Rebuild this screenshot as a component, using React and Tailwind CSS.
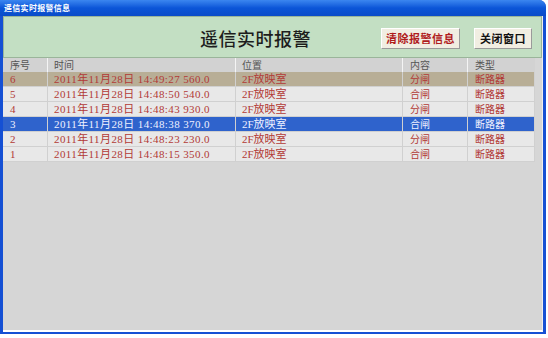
import React from "react";

const rows = [
  { id: "6", time: "2011年11月28日 14:49:27 560.0", loc: "2F放映室", act: "分闸", type: "断路器", sel: "tan" },
  { id: "5", time: "2011年11月28日 14:48:50 540.0", loc: "2F放映室", act: "合闸", type: "断路器" },
  { id: "4", time: "2011年11月28日 14:48:43 930.0", loc: "2F放映室", act: "分闸", type: "断路器" },
  { id: "3", time: "2011年11月28日 14:48:38 370.0", loc: "2F放映室", act: "合闸", type: "断路器", sel: "blue" },
  { id: "2", time: "2011年11月28日 14:48:23 230.0", loc: "2F放映室", act: "分闸", type: "断路器" },
  { id: "1", time: "2011年11月28日 14:48:15 350.0", loc: "2F放映室", act: "合闸", type: "断路器" },
];

const cjk = { fontFamily: '"Noto Sans CJK SC", sans-serif' };
const serif = { fontFamily: '"Liberation Serif", "Noto Sans CJK SC", serif' };

export default function App() {
  return (
    <div className="w-[548px] h-[338px] bg-white overflow-hidden">
      <div className="w-[546px] h-[334px] bg-[#1550d4] flex flex-col rounded-tr-[7px] px-[3px] pb-[2px]">
        {/* title bar */}
        <div className="h-[16px] shrink-0 -mx-[3px] px-[4px] flex items-center rounded-tr-[7px] bg-gradient-to-b from-[#3b86f0] via-[#0b55d8] to-[#0a4cc8]">
          <span className="text-[8px] font-bold text-white leading-none tracking-[0.3px]" style={cjk}>遥信实时报警信息</span>
        </div>
        {/* client */}
        <div className="flex-1 flex flex-col bg-[#d6d6d6] border-b-[2px] border-b-white border-r border-r-[#eeeeee]">
          {/* green panel */}
          <div className="h-[42px] shrink-0 bg-[#c3dfc3] border border-[#9ab59a] flex items-center">
            <div className="w-[196px]" />
            <div className="text-[18px] font-medium text-[#1d1d1d] tracking-[0.5px] leading-none pt-[2px]" style={cjk}>遥信实时报警</div>
            <div className="flex-1" />
            <button className="w-[79px] h-[21px] bg-[#f1eee2] border border-t-white border-l-white border-r-[#9a9a9a] border-b-[#9a9a9a] text-[11px] font-bold text-[#b01c1c] leading-none mt-[2px] tracking-[0.5px]" style={cjk}>清除报警信息</button>
            <div className="w-[14px]" />
            <button className="w-[58px] h-[21px] bg-[#f1eee2] border border-t-white border-l-white border-r-[#9a9a9a] border-b-[#9a9a9a] text-[11px] font-bold text-[#111] leading-none mt-[2px] tracking-[0.5px]" style={cjk}>关闭窗口</button>
            <div className="w-[9px]" />
          </div>
          {/* header */}
          <div className="h-[14px] shrink-0 flex text-[10px] text-[#555]" style={cjk}>
            <div className="w-[45px] pl-[7px] bg-[#d2d2d2] border-r border-[#f4f4f4] flex items-center leading-none">序号</div>
            <div className="w-[188px] pl-[6px] bg-[#d2d2d2] border-r border-[#f4f4f4] flex items-center leading-none">时间</div>
            <div className="w-[167px] pl-[6px] bg-[#d2d2d2] border-r border-[#f4f4f4] flex items-center leading-none">位置</div>
            <div className="w-[65px] pl-[7px] bg-[#d2d2d2] border-r border-[#f4f4f4] flex items-center leading-none">内容</div>
            <div className="w-[67px] pl-[7px] bg-[#d2d2d2] flex items-center leading-none">类型</div>
          </div>
          {rows.map((r) => {
            const bg =
              r.sel === "tan" ? "bg-[#b8ae96]" : r.sel === "blue" ? "bg-[#2f63cc]" : "bg-[#e8e8e8]";
            const tc = r.sel === "blue" ? "text-[#eef0ff]" : "text-[#b23a36]";
            const cell = `${bg} border-r border-b border-[#d0d0d0] h-[15px] flex items-center leading-none overflow-hidden whitespace-nowrap`;
            return (
              <div key={r.id} className={`flex ${tc}`}>
                <div className={`w-[45px] pl-[7px] text-[11px] ${cell}`} style={serif}>{r.id}</div>
                <div className={`w-[188px] pl-[6px] text-[11px] tracking-[0.4px] ${cell}`} style={serif}>{r.time}</div>
                <div className={`w-[167px] pl-[6px] text-[11px] ${cell}`} style={serif}>{r.loc}</div>
                <div className={`w-[65px] pl-[7px] text-[10px] ${cell}`} style={cjk}>{r.act}</div>
                <div className={`w-[67px] pl-[7px] text-[10px] ${cell}`} style={cjk}>{r.type}</div>
              </div>
            );
          })}
          <div className="flex-1" />
        </div>
      </div>
    </div>
  );
}
